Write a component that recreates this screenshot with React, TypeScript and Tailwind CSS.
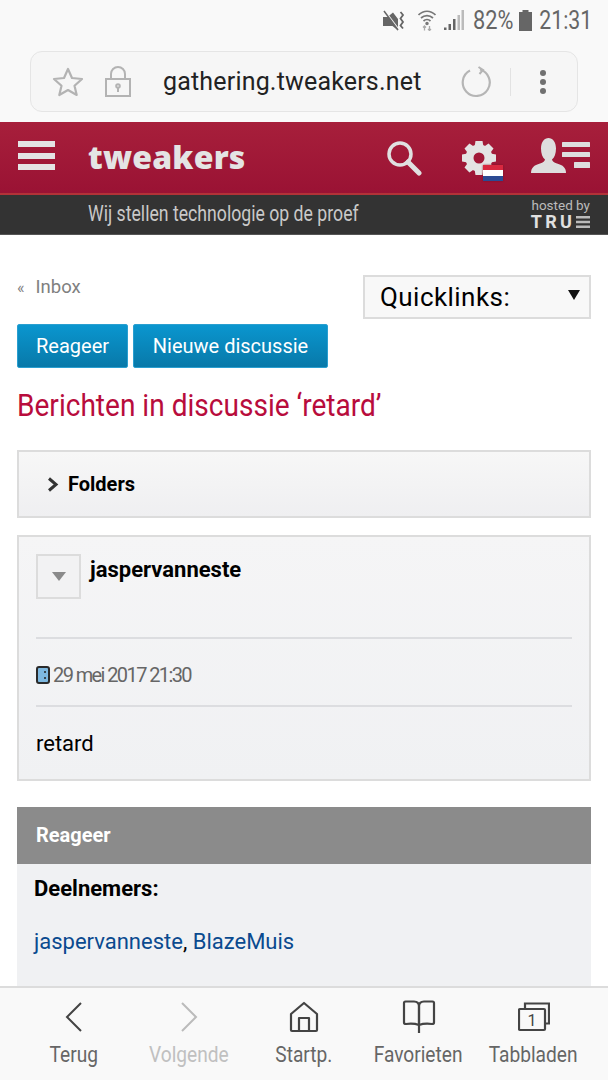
import React from "react";

const StatusIcons = () => (
  <div className="flex items-center h-10 justify-end pr-[16px] text-[#666] bg-[#f9f9f9] font-['Roboto',sans-serif]">
    <svg width="22" height="21" viewBox="0 0 22 21" className="mr-[13px]">
      <path d="M0 7h4.500L10 2.500 15 9v11.500L9.500 16H0z" fill="#666" />
      <path d="M1.500 0.500L15 18.500" stroke="#f9f9f9" strokeWidth="1.500" />
      <path d="M1 1l14 19" stroke="#666" strokeWidth="1.500" />
      <path d="M17.500 2l2.500 3-2.500 3.500 2.500 3.500-2.500 3.500 2.500 3" stroke="#666" strokeWidth="1.800" fill="none" />
    </svg>
    <svg width="18" height="21" viewBox="0 0 18 21" className="mr-[8px]" fill="none" stroke="#777" strokeWidth="1.700">
      <path d="M0.500 5c5-5 12-5 17 0" />
      <path d="M3 8c3.500-3.200 8.500-3.200 12 0" />
      <path d="M5.500 11c2-1.800 5-1.800 7 0" />
      <circle cx="9" cy="13.500" r="0.900" fill="#777" />
      <path d="M6.500 20.500v-4.500M5 17.500L6.500 16 8 17.500M11.500 16v4.500M10 19l1.500 1.500L13 19" stroke="#aaa" strokeWidth="1.300" />
    </svg>
    <svg width="20" height="21" viewBox="0 0 20 21" className="mr-[10px]">
      <path d="M0 20h2.500v-2.500H0zM4.500 20H7v-6H4.500zM9 20h2.500V9H9z" fill="#666" />
      <path d="M13.500 20H16V5h-2.500zM17.500 20H20V0h-2.500z" fill="#bbb" />
    </svg>
    <div className="w-[39px] flex justify-end">
      <span className="text-[25px] leading-none scale-x-[0.87] origin-right inline-block whitespace-nowrap">82%</span>
    </div>
    <svg width="13" height="21" viewBox="0 0 13 21" className="ml-[6px] mr-[8px]" fill="#666">
      <path d="M3.500 0h6v2H13v19H0V2h3.500z" />
    </svg>
    <div className="w-[52px] flex justify-end">
      <span className="text-[25px] leading-none scale-x-[0.85] origin-right inline-block whitespace-nowrap">21:31</span>
    </div>
  </div>
);

const AddressBar = () => (
  <div className="h-[82px] bg-[#f9f9f9] pt-[11px] px-[30px]">
    <div className="h-[61px] w-[548px] rounded-[12px] border border-[#e5e5e5] bg-[#f6f6f6] flex items-center relative">
      <svg width="32" height="32" viewBox="0 0 32 32" className="ml-[21px]" fill="none" stroke="#b3b3b3" strokeWidth="2.200" strokeLinejoin="round">
        <path d="M16 3l4 9 10 1-7.500 6.800L24.700 29 16 24l-8.700 5 2.200-9.200L2 13l10-1z" />
      </svg>
      <svg width="28" height="32" viewBox="0 0 28 32" className="ml-[20px]" fill="none" stroke="#b3b3b3" strokeWidth="2">
        <rect x="2" y="13" width="24" height="17" />
        <path d="M7 13V8a7 7 0 0 1 14 0v5" />
        <circle cx="14" cy="20" r="1.800" />
        <path d="M14 22v4" />
      </svg>
      <span className="ml-[31px] w-[259px] whitespace-nowrap text-[25px] leading-none text-[#222] font-['Roboto',sans-serif] tracking-[0.18px]">gathering.tweakers.net</span>
      <svg width="32" height="32" viewBox="0 0 32 32" className="ml-[38px]" fill="none" stroke="#b5b5b5" strokeWidth="2.200">
        <path d="M20 3.500A13.500 13.500 0 1 1 10 4.500" />
        <path d="M18.500 1l4.500 3-3.500 4" strokeWidth="2" />
      </svg>
      <div className="w-px h-[28px] bg-[#e2e2e2] ml-[18px]" />
      <div className="ml-[29px] flex flex-col gap-[3px]">
        <div className="w-[6px] h-[6px] rounded-full bg-[#707070]" />
        <div className="w-[6px] h-[6px] rounded-full bg-[#707070]" />
        <div className="w-[6px] h-[6px] rounded-full bg-[#707070]" />
      </div>
    </div>
  </div>
);

const teeth = [0, 45, 90, 135, 180, 225, 270, 315];

const Header = () => (
  <div className="h-[73px] bg-gradient-to-b from-[#a71f3b] to-[#9a1234] border-b-[2px] border-[#b23238] flex items-center relative">
    <div className="ml-[18px] flex flex-col gap-[5.500px] mt-[-4px]">
      <div className="w-[37px] h-[6px] bg-[#e4e4e4]" />
      <div className="w-[37px] h-[6px] bg-[#e4e4e4]" />
      <div className="w-[37px] h-[6px] bg-[#e4e4e4]" />
    </div>
    <span className="ml-[33px] mt-[-1px] w-[157px] text-[32px] leading-none font-extrabold text-[#e4e4e4] font-['Open_Sans',sans-serif] tracking-[0.2px]">tweakers</span>
    <svg width="36" height="36" viewBox="0 0 36 36" className="ml-[141px] mt-[1px]" fill="none" stroke="#e0e0e0">
      <circle cx="14" cy="14" r="11" strokeWidth="3.500" />
      <path d="M22 22l11 11" strokeWidth="5" strokeLinecap="round" />
    </svg>
    <div className="relative ml-[39px] w-[42px] h-[40px] mt-[4px]">
      <svg width="36" height="36" viewBox="0 0 36 36">
        <circle cx="18" cy="18" r="9.500" fill="none" stroke="#e4e4e4" strokeWidth="8" />
        {teeth.map((a) => (
          <path key={a} d="M14.500 1h7l1.200 7h-9.400z" fill="#e4e4e4" transform={`rotate(${a} 18 18)`} />
        ))}
      </svg>
      <div className="absolute left-[22px] top-[25px] w-[20px] h-[16px] flex flex-col rounded-[1px] shadow-[0_0_2px_#7a1020]">
        <div className="h-[5px] bg-[#d8283f]" />
        <div className="h-[6px] bg-white" />
        <div className="h-[5px] bg-[#2b4a93]" />
      </div>
    </div>
    <svg width="60" height="36" viewBox="0 0 60 36" className="ml-[28px] mt-[-3px]" fill="#dedede">
      <path d="M0 35c0-5 3-8 9-9.500 3-1 5-2.500 5-4-2.500-2-4-6-4-11C10 4 13.500 0 17.500 0s7.500 4 7.500 10.500c0 5-1.500 9-4 11 0 1.500 2 3 5 4 6 1.500 9 4.500 9 9.500z" />
      <rect x="31" y="4" width="28" height="5" rx="0.500" />
      <rect x="31" y="14" width="28" height="5" rx="0.500" />
      <rect x="43" y="24" width="16" height="6" rx="0.500" />
    </svg>
  </div>
);

const SubHeader = () => (
  <div className="h-[40px] bg-[#333] border-b border-[#555] flex items-center relative">
    <span className="ml-[88px] mt-[-2px] text-[22px] leading-none text-[#c9c9c9] font-['Roboto',sans-serif] scale-x-[0.803] origin-left inline-block whitespace-nowrap">Wij stellen technologie op de proef</span>
    <div className="absolute right-[18px] top-[2px] flex flex-col items-end">
      <span className="text-[13.500px] leading-[16px] text-[#bbb] font-['Roboto',sans-serif]">hosted by</span>
      <span className="flex items-center gap-[1px] text-[18px] leading-[17px] font-bold text-[#e0e0e0] font-['Roboto',sans-serif] tracking-[3.200px]">
        TRU
        <svg width="14" height="12" viewBox="0 0 14 12" fill="#bbb"><rect width="14" height="2.500" /><rect y="4.750" width="14" height="2.500" /><rect y="9.500" width="14" height="2.500" /></svg>
      </span>
    </div>
  </div>
);

const Btn = ({ children, w }: { children: React.ReactNode; w: string }) => (
  <div className={`${w} h-[44px] rounded-[2px] border border-[#2a9fd0] bg-gradient-to-b from-[#0a96cf] to-[#0879a9] text-white text-[20px] leading-none flex items-center justify-center font-['Roboto',sans-serif]`}>
    {children}
  </div>
);

const Content = () => (
  <div className="px-[17px] font-['Roboto',sans-serif]">
    <div className="flex justify-between items-start pt-[40px]">
      <div className="text-[18.500px] leading-[24px] text-[#808080]">
        <span className="text-[16px]">«</span>
        <span className="ml-[11px]">Inbox</span>
      </div>
      <div className="w-[228px] h-[44px] border-2 border-[#dcdcdc] bg-[#f8f8f8] flex items-center pl-[15px] pr-[9px] justify-between text-black">
        <span className="text-[26px] leading-none tracking-[0.45px]">Quicklinks:</span>
        <svg width="12" height="12" viewBox="0 0 12 12" fill="#111" className="mt-[-4px]"><path d="M0 1h12L6 11z" /></svg>
      </div>
    </div>
    <div className="flex gap-[5px] mt-[5px]">
      <Btn w="w-[111px]">Reageer</Btn>
      <Btn w="w-[195px]">Nieuwe discussie</Btn>
    </div>
    <h1 className="mt-[16px] h-[42px] text-[32px] leading-[42px] text-[#b80c3c] font-normal scale-x-[0.877] origin-left whitespace-nowrap">Berichten in discussie ‘retard’</h1>
    <div className="mt-[24px] h-[68px] border-2 border-[#dcdcdc] bg-gradient-to-b from-[#f7f7f7] to-[#efeff1] flex items-center pl-[28px]">
      <svg width="12" height="15" viewBox="0 0 12 15" fill="none" stroke="#333" strokeWidth="3"><path d="M2 1.500l7 6-7 6" /></svg>
      <span className="ml-[9px] text-[20px] font-bold text-black leading-none">Folders</span>
    </div>
    <div className="mt-[17px] h-[246px] border-2 border-[#dcdcdc] bg-gradient-to-b from-[#f5f5f6] to-[#f0f1f3] px-[17px] relative">
      <div className="flex items-start pt-[17px] h-[102px] border-b-2 border-[#dcdde0]">
        <div className="w-[45px] h-[45px] border-2 border-[#dcdcdc] bg-[#f2f2f3] flex items-center justify-center">
          <svg width="14" height="9" viewBox="0 0 14 9" fill="#8a8a8a"><path d="M0 0h14L7 9z" /></svg>
        </div>
        <span className="ml-[9px] mt-[2px] text-[22px] leading-[28px] font-bold text-black">jaspervanneste</span>
      </div>
      <div className="h-[68px] pt-[6px] flex items-center border-b-2 border-[#dcdde0] text-[#666]">
        <svg width="14" height="18" viewBox="0 0 14 18" className="shrink-0">
          <rect x="1" y="1" width="12" height="16" rx="2" fill="#7db8e0" stroke="#2a2a2a" strokeWidth="2" />
          <circle cx="9" cy="6" r="1" fill="#222" />
          <circle cx="9" cy="12" r="1" fill="#222" />
        </svg>
        <span className="ml-[3px] text-[20px] leading-none tracking-[-1.600px] whitespace-nowrap">29 mei 2017 21:30</span>
      </div>
      <div className="text-[22px] leading-[28px] text-black pt-[23px]">retard</div>
    </div>
    <div className="mt-[26px] h-[57px] pb-[2px] bg-[#8b8b8b] text-white text-[20px] font-bold flex items-center pl-[19px]">Reageer</div>
    <div className="bg-[#f0f1f3] h-[200px] pl-[17px]">
      <div className="pt-[12px] text-[22px] leading-[26px] font-bold text-black">Deelnemers:</div>
      <div className="mt-[27px] text-[22px] leading-[26px] text-black">
        <span className="text-[#0a4a8f]">jaspervanneste</span>, <span className="text-[#0a4a8f]">BlazeMuis</span>
      </div>
    </div>
  </div>
);

const NavItem = ({ label, dim, children }: { label: string; dim?: boolean; children: React.ReactNode }) => (
  <div className="flex flex-col items-center w-[115px]">
    <div className="h-[46px] flex items-center justify-center">{children}</div>
    <span className={`text-[22px] leading-[26px] mt-[2px] whitespace-nowrap scale-x-[0.87] ${dim ? "text-[#c0c0c0]" : "text-[#666]"}`}>{label}</span>
  </div>
);

const BottomBar = () => (
  <div className="absolute left-0 right-0 bottom-0 h-[94px] bg-[#f9f9f9] border-t-2 border-[#dcdcdc] flex pt-[6px] pl-[16px] font-['Roboto',sans-serif]">
    <NavItem label="Terug">
      <svg width="20" height="32" viewBox="0 0 20 32" fill="none" stroke="#444" strokeWidth="2"><path d="M17 2L3 16l14 14" /></svg>
    </NavItem>
    <NavItem label="Volgende" dim>
      <svg width="20" height="32" viewBox="0 0 20 32" fill="none" stroke="#bbb" strokeWidth="2"><path d="M3 2l14 14L3 30" /></svg>
    </NavItem>
    <NavItem label="Startp.">
      <svg width="30" height="32" viewBox="0 0 30 32" fill="none" stroke="#444" strokeWidth="2.200" strokeLinejoin="round"><path d="M15 2L2 13v16a1 1 0 0 0 1 1h24a1 1 0 0 0 1-1V13z" /><path d="M10 30V17h10v13" /></svg>
    </NavItem>
    <NavItem label="Favorieten">
      <svg width="34" height="34" viewBox="0 0 34 34" fill="none" stroke="#444" strokeWidth="2.200" strokeLinejoin="round"><path d="M17 25c-4-1.500-9-1.500-13-1-1 0-2-.5-2-1.500V3c0-1 .5-1.500 1.500-1.500H12c3 0 5 2 5 5z" /><path d="M17 33V6.500c0-3 2-5 5-5h8.500c1 0 1.500.5 1.500 1.500v19.500c0 1-1 1.500-2 1.500-4-.5-9-.5-13 1" /></svg>
    </NavItem>
    <NavItem label="Tabbladen">
      <svg width="32" height="30" viewBox="0 0 32 30" fill="none" stroke="#444" strokeWidth="2.200">
        <path d="M7 6V1.500h24v20h-4" />
        <rect x="1" y="7" width="26" height="21" rx="1" />
        <text x="14" y="24" textAnchor="middle" fontSize="16" fill="#444" stroke="none" fontFamily="Roboto">1</text>
      </svg>
    </NavItem>
  </div>
);

export default function App() {
  return (
    <div className="relative w-[608px] h-[1080px] overflow-hidden bg-white">
      <StatusIcons />
      <AddressBar />
      <Header />
      <SubHeader />
      <Content />
      <BottomBar />
    </div>
  );
}
